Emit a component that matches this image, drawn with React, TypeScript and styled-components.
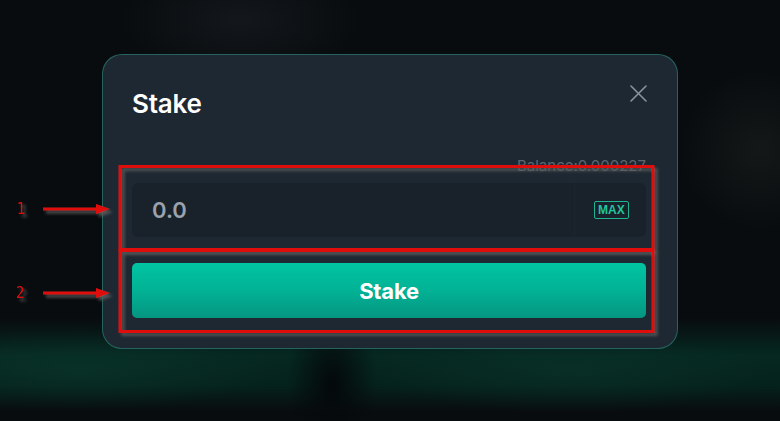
import React from 'react';
import styled, { createGlobalStyle } from 'styled-components';

const GlobalStyle = createGlobalStyle`
  html, body {
    margin: 0;
    padding: 0;
    height: 100%;
  }
  body {
    font-family: "Inter", "Liberation Sans", sans-serif;
    background-color: #090c0f;
    background-image:
      radial-gradient(ellipse 45px 80px at 332px 385px, rgba(4, 8, 10, 1), rgba(4, 8, 10, 0) 100%),
      radial-gradient(ellipse 200px 40px at 80px 370px, rgba(12, 60, 48, 0.5), rgba(12, 60, 48, 0) 100%),
      radial-gradient(ellipse 200px 40px at 570px 372px, rgba(12, 58, 46, 0.45), rgba(12, 58, 46, 0) 100%),
      linear-gradient(180deg, rgba(5, 42, 34, 0) 318px, rgba(5, 42, 34, 0.95) 355px, rgba(4, 38, 30, 0.85) 385px, rgba(5, 40, 32, 0) 412px),
      radial-gradient(ellipse 120px 60px at 240px 20px, rgba(30, 34, 38, 0.5), rgba(30, 34, 38, 0) 100%),
      radial-gradient(ellipse 80px 80px at 760px 150px, rgba(30, 36, 32, 0.5), rgba(30, 36, 32, 0) 100%);
    overflow: hidden;
  }
`;

// Full page backdrop
const Page = styled.div`
  position: relative;
  width: 780px;
  height: 421px;
  display: flex;
  justify-content: center;
  align-items: flex-start;
  padding-top: 54px;
  box-sizing: border-box;
`;

// Modal card
const Modal = styled.div`
  width: 576px;
  height: 295px;
  box-sizing: border-box;
  background: #1e2832;
  border: 1px solid rgba(44, 150, 132, 0.55);
  border-radius: 20px;
  padding: 29px 31px 29px 29px;
  display: flex;
  flex-direction: column;
`;

const HeaderRow = styled.div`
  display: flex;
  justify-content: space-between;
  align-items: flex-start;
`;

const Title = styled.h2`
  margin: 0;
  padding-top: 4px;
  font-family: "Inter", "Liberation Sans", sans-serif;
  font-size: 26px;
  font-weight: 600;
  letter-spacing: -0.2px;
  line-height: 32px;
  color: #ffffff;
`;

const CloseButton = styled.button`
  background: none;
  border: none;
  padding: 0;
  margin: 1px -1px 0 0;
  width: 17px;
  height: 17px;
  cursor: pointer;
  display: flex;
  align-items: center;
  justify-content: center;
`;

const BalanceRow = styled.div`
  margin-top: 37px;
  text-align: right;
  font-family: "Inter", "Liberation Sans", sans-serif;
  font-size: 15px;
  line-height: 18px;
  color: #5d666f;
`;

const InputBox = styled.div`
  margin-top: 8px;
  height: 54px;
  display: flex;
  align-items: stretch;
  background: #19212a;
  border-radius: 6px;
`;

const AmountInput = styled.input`
  flex: 1;
  min-width: 0;
  background: transparent;
  border: none;
  outline: none;
  padding: 0 0 0 20px;
  font-family: "Inter", "Liberation Sans", sans-serif;
  font-size: 22px;
  font-weight: 600;
  color: #9aa2ad;

  &::placeholder {
    color: #9aa2ad;
  }
`;

const MaxCell = styled.div`
  width: 72px;
  display: flex;
  align-items: center;
  justify-content: flex-start;
  padding-left: 19px;
  box-sizing: border-box;
  border-left: 1px solid #1c242d;
`;

const MaxTag = styled.button`
  border: 1px solid #1fb393;
  border-radius: 2px;
  background: transparent;
  color: #22c39f;
  font-family: "Liberation Sans", "Inter", sans-serif;
  font-size: 12px;
  font-weight: 700;
  line-height: 14px;
  padding: 1px 3px;
  cursor: pointer;
`;

const StakeButton = styled.button`
  margin-top: 26px;
  height: 55px;
  border: none;
  border-radius: 5px;
  background: linear-gradient(180deg, #00c4a2 0%, #02b295 50%, #059580 100%);
  color: #ffffff;
  font-family: "Inter", "Liberation Sans", sans-serif;
  font-size: 22px;
  font-weight: 700;
  letter-spacing: -0.2px;
  cursor: pointer;
`;

// Screenshot annotation layer drawn over the page
const Annotations = styled.svg`
  position: absolute;
  left: 0;
  top: 0;
  pointer-events: none;
`;

const Label = styled.text`
  font-family: "DejaVu Sans Condensed", "Liberation Sans Narrow", "Liberation Sans", sans-serif;
  font-size: 15px;
  fill: #e01010;
`;

const CloseIcon = () => (
  <svg width="17" height="17" viewBox="0 0 17 17" fill="none">
    <path d="M1 1L16 16M16 1L1 16" stroke="#8a939c" strokeWidth="1.6" strokeLinecap="round" />
  </svg>
);

const Arrow: React.FC<{ y: number }> = ({ y }) => (
  <g>
    <line x1="43" y1={y} x2="98" y2={y} stroke="#e01010" strokeWidth="3" />
    <polygon points={`96,${y - 5} 110,${y} 96,${y + 5}`} fill="#e01010" />
  </g>
);

const App: React.FC = () => {
  return (
    <>
      <GlobalStyle />
      <Page>
        <Modal>
          <HeaderRow>
            <Title>Stake</Title>
            <CloseButton aria-label="close">
              <CloseIcon />
            </CloseButton>
          </HeaderRow>
          <BalanceRow>Balance:0.000227</BalanceRow>
          <InputBox>
            <AmountInput placeholder="0.0" />
            <MaxCell>
              <MaxTag>MAX</MaxTag>
            </MaxCell>
          </InputBox>
          <StakeButton>Stake</StakeButton>
        </Modal>

        <Annotations width="780" height="421" viewBox="0 0 780 421">
          <defs>
            <filter id="snag" x="-10%" y="-10%" width="130%" height="130%">
              <feDropShadow dx="3" dy="3" stdDeviation="1.4" floodColor="#5a5a5a" floodOpacity="0.9" />
            </filter>
          </defs>
          <g filter="url(#snag)">
            <rect x="120" y="166.5" width="533" height="83" fill="none" stroke="#e01010" strokeWidth="3" />
            <rect x="120" y="250.5" width="533" height="81" fill="none" stroke="#e01010" strokeWidth="3" />
            <Arrow y={209} />
            <Arrow y={293} />
            <Label x="17" y="214">1</Label>
            <Label x="16" y="298">2</Label>
          </g>
        </Annotations>
      </Page>
    </>
  );
};

export default App;
